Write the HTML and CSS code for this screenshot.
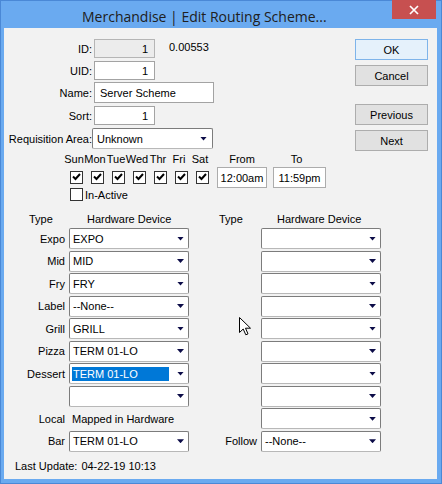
FILE: index.html
```html
<!DOCTYPE html>
<html>
<head>
<meta charset="utf-8">
<link rel="stylesheet" href="styles.css">
</head>
<body>
<div class="window">
  <div class="titlebar">
    <div class="title">Merchandise | Edit Routing Scheme...</div>
    <div class="close"><svg width="10" height="10" viewBox="0 0 10 10"><path d="M1 1L9 9M9 1L1 9" stroke="#fff" stroke-width="1.7"/></svg></div>
  </div>
  <div class="client">
    <div class="top">
      <div class="form">
        <div class="frow r-id"><span class="lbl">ID:</span><div class="tb num dis">1</div><span class="extra">0.00553</span></div>
        <div class="frow r-uid"><span class="lbl">UID:</span><div class="tb num">1</div></div>
        <div class="frow r-name"><span class="lbl">Name:</span><div class="tb name">Server Scheme</div></div>
        <div class="frow r-sort"><span class="lbl">Sort:</span><div class="tb num">1</div></div>
        <div class="frow r-req"><span class="lbl">Requisition Area:</span><div class="dd req"><span class="v">Unknown</span><i class="ar"></i></div></div>
      </div>
      <div class="buttons">
        <div class="btn default">OK</div>
        <div class="btn">Cancel</div>
        <div class="btn gap">Previous</div>
        <div class="btn">Next</div>
      </div>
    </div>

    <div class="days">
      <div class="day"><span class="dl">Sun</span><div class="cell"><span class="cb"><svg viewBox="0 0 11 11" width="11" height="11"><path d="M2 4.5L4.5 7L9 2" fill="none" stroke="#000" stroke-width="2"/></svg></span></div></div>
      <div class="day"><span class="dl">Mon</span><div class="cell"><span class="cb"><svg viewBox="0 0 11 11" width="11" height="11"><path d="M2 4.5L4.5 7L9 2" fill="none" stroke="#000" stroke-width="2"/></svg></span></div></div>
      <div class="day"><span class="dl">Tue</span><div class="cell"><span class="cb"><svg viewBox="0 0 11 11" width="11" height="11"><path d="M2 4.5L4.5 7L9 2" fill="none" stroke="#000" stroke-width="2"/></svg></span></div></div>
      <div class="day"><span class="dl">Wed</span><div class="cell"><span class="cb"><svg viewBox="0 0 11 11" width="11" height="11"><path d="M2 4.5L4.5 7L9 2" fill="none" stroke="#000" stroke-width="2"/></svg></span></div></div>
      <div class="day"><span class="dl">Thr</span><div class="cell"><span class="cb"><svg viewBox="0 0 11 11" width="11" height="11"><path d="M2 4.5L4.5 7L9 2" fill="none" stroke="#000" stroke-width="2"/></svg></span></div></div>
      <div class="day"><span class="dl">Fri</span><div class="cell"><span class="cb"><svg viewBox="0 0 11 11" width="11" height="11"><path d="M2 4.5L4.5 7L9 2" fill="none" stroke="#000" stroke-width="2"/></svg></span></div></div>
      <div class="day"><span class="dl">Sat</span><div class="cell"><span class="cb"><svg viewBox="0 0 11 11" width="11" height="11"><path d="M2 4.5L4.5 7L9 2" fill="none" stroke="#000" stroke-width="2"/></svg></span></div></div>
      <div class="time from"><span class="tl">From</span><div class="tm">12:00am</div></div>
      <div class="time to"><span class="tl">To</span><div class="tm">11:59pm</div></div>
    </div>
    <div class="inactive"><span class="cb"></span><span class="ial">In-Active</span></div>

    <div class="hgrid">
      <span class="h-type1">Type</span>
      <span class="h-hw1">Hardware Device</span>
      <span class="h-type2">Type</span>
      <span class="h-hw2">Hardware Device</span>
    </div>
    <div class="grid">
      <span class="glbl">Expo</span><div class="dd"><span class="v">EXPO</span><i class="ar"></i></div><span></span><div class="dd"><span class="v"></span><i class="ar"></i></div>
      <span class="glbl">Mid</span><div class="dd"><span class="v">MID</span><i class="ar"></i></div><span></span><div class="dd"><span class="v"></span><i class="ar"></i></div>
      <span class="glbl">Fry</span><div class="dd"><span class="v">FRY</span><i class="ar"></i></div><span></span><div class="dd"><span class="v"></span><i class="ar"></i></div>
      <span class="glbl">Label</span><div class="dd"><span class="v">--None--</span><i class="ar"></i></div><span></span><div class="dd"><span class="v"></span><i class="ar"></i></div>
      <span class="glbl">Grill</span><div class="dd"><span class="v">GRILL</span><i class="ar"></i></div><span></span><div class="dd"><span class="v"></span><i class="ar"></i></div>
      <span class="glbl">Pizza</span><div class="dd"><span class="v">TERM 01-LO</span><i class="ar"></i></div><span></span><div class="dd"><span class="v"></span><i class="ar"></i></div>
      <span class="glbl">Dessert</span><div class="dd"><span class="v sel">TERM 01-LO</span><i class="ar"></i></div><span></span><div class="dd"><span class="v"></span><i class="ar"></i></div>
      <span class="glbl"></span><div class="dd"><span class="v"></span><i class="ar"></i></div><span></span><div class="dd"><span class="v"></span><i class="ar"></i></div>
      <span class="glbl">Local</span><span class="mapped">Mapped in Hardware</span><span></span><div class="dd"><span class="v"></span><i class="ar"></i></div>
      <span class="glbl">Bar</span><div class="dd"><span class="v">TERM 01-LO</span><i class="ar"></i></div><span class="glbl">Follow</span><div class="dd"><span class="v">--None--</span><i class="ar"></i></div>
    </div>
    <div class="lastupd"><span class="lu-l">Last Update:</span><span>04-22-19 10:13</span></div>
  </div>
  <svg class="cursor" width="13" height="19" viewBox="0 0 13 19"><path d="M0.5 0.5V15.5L4.2 12L6.8 17.8L9 16.9L6.5 11.2H11.5Z" fill="#fff" stroke="#000" stroke-width="1"/></svg>
</div>
</body>
</html>
```
FILE: styles.css
```css
body {
  margin: 0;
  background: #ffffff;
}

.window {
  position: relative;
  width: 442px;
  height: 484px;
  box-sizing: border-box;
  background: #6aaaf0;
  border: 1px solid #4a88d6;
  display: flex;
  flex-direction: column;
  font-family: "Liberation Sans", Arial, sans-serif;
  font-size: 11px;
  line-height: 14px;
  color: #000;
}

.titlebar {
  height: 27px;
  display: flex;
  align-items: flex-start;
}

.title {
  flex: 1;
  padding-left: 81px;
  margin-top: 6px;
  font-family: "Open Sans", "Noto Sans", sans-serif;
  font-size: 14px;
  line-height: 19px;
  color: #202020;
  white-space: nowrap;
}

.close {
  width: 44px;
  height: 19px;
  margin-top: -1px;
  margin-right: 5px;
  background: #c75050;
  display: flex;
  align-items: center;
  justify-content: center;
}

.client {
  flex: 1;
  margin: 0 4px 4px 3px;
  background: #f2f2f2;
  padding-top: 11px;
}

/* ---------- top form ---------- */
.top {
  display: flex;
  align-items: flex-start;
}

.form {
  display: flex;
  flex-direction: column;
}

.frow {
  display: flex;
  align-items: center;
}

.lbl {
  width: 88px;
  text-align: right;
  white-space: nowrap;
  margin-right: 2px;
}

.r-uid { margin-top: 3px; }
.r-name { margin-top: 2px; }
.r-sort { margin-top: 3px; }
.r-req { margin-top: 3px; }

.tb {
  box-sizing: border-box;
  height: 19px;
  width: 61px;
  border: 1px solid #a3a3a3;
  background: #fff;
  display: flex;
  align-items: center;
  padding: 0 6px 0 5px;
}

.tb.num {
  justify-content: flex-end;
}

.tb.dis {
  background: #ececec;
  border-color: #b5b5b5;
}

.tb.name {
  width: 120px;
  height: 21px;
}

.extra {
  margin-left: 14px;
  margin-top: -3px;
}

/* ---------- buttons ---------- */
.buttons {
  margin-left: auto;
  margin-right: 9px;
  width: 73px;
  display: flex;
  flex-direction: column;
}

.btn {
  box-sizing: border-box;
  height: 21px;
  border: 1px solid #adadad;
  background: #e1e1e1;
  display: flex;
  align-items: center;
  justify-content: center;
  margin-top: 5px;
}

.btn.default {
  margin-top: 0;
  background: #e5f1fb;
  border-color: #7eb4ea;
}

.btn.gap {
  margin-top: 18px;
}

/* ---------- dropdown ---------- */
.dd {
  box-sizing: border-box;
  height: 21px;
  border: 1px solid #7c7c7c;
  border-bottom-color: #b8b8b8;
  border-radius: 2px;
  background: #fff;
  display: flex;
  align-items: center;
  padding: 0 4px 0 2px;
}

.dd .v {
  flex: 1;
  height: 14px;
  line-height: 14px;
  padding-left: 1px;
  margin-right: 8px;
  white-space: nowrap;
  overflow: hidden;
}

.dd .v.sel {
  background: #0078d7;
  color: #fff;
}

.dd .ar {
  width: 7px;
  height: 4px;
  background: #0c0c48;
  clip-path: polygon(0 0, 100% 0, 50% 100%);
}

.dd.req {
  width: 121px;
  margin-left: -2px;
  padding-left: 3px;
  padding-right: 5px;
}

/* ---------- days ---------- */
.days {
  display: flex;
  margin-top: 1px;
  margin-left: 62px;
}

.day {
  width: 21px;
  display: flex;
  flex-direction: column;
  align-items: center;
}

.dl {
  margin-right: 5px;
  white-space: nowrap;
  height: 14px;
}

.cell {
  height: 21px;
  margin-top: 1px;
  display: flex;
  align-items: center;
}

.cb {
  box-sizing: border-box;
  width: 13px;
  height: 13px;
  border: 1px solid #333;
  background: #fff;
  display: flex;
}

.time {
  display: flex;
  flex-direction: column;
  align-items: center;
}

.time.from {
  width: 50px;
  margin-left: 4px;
}

.time.to {
  width: 53px;
  margin-left: 6px;
}

.tl {
  height: 14px;
  white-space: nowrap;
}

.tm {
  box-sizing: border-box;
  width: 100%;
  height: 21px;
  margin-top: 1px;
  border: 1px solid #acacac;
  background: #fff;
  display: flex;
  align-items: center;
  justify-content: center;
}

.time.to .tl {
  margin-right: 6px;
}

.inactive {
  margin-left: 66px;
  display: flex;
  align-items: center;
  height: 13px;
}

.ial {
  margin-left: 2px;
}

/* ---------- device grid ---------- */
.hgrid {
  margin-top: 11px;
  display: grid;
  grid-template-columns: 61px 120px 64px 120px;
  column-gap: 4px;
  height: 14px;
  margin-bottom: 2px;
  white-space: nowrap;
}

.h-type1 { padding-left: 25px; }
.h-hw1 { padding-left: 18px; }
.h-type2 { padding-left: 26px; }
.h-hw2 { padding-left: 16px; }

.grid {
  display: grid;
  grid-template-columns: 61px 120px 64px 120px;
  grid-auto-rows: 21px;
  column-gap: 4px;
  row-gap: 1.52px;
  align-items: center;
}

.glbl {
  text-align: right;
  white-space: nowrap;
}

.mapped {
  padding-left: 3px;
  white-space: nowrap;
}

.lastupd {
  margin-top: 7px;
  padding-left: 11px;
  display: flex;
  height: 14px;
}

.lu-l {
  margin-right: 4px;
  white-space: nowrap;
}

/* mouse pointer overlay */
.cursor {
  position: absolute;
  left: 238px;
  top: 316px;
}
```
